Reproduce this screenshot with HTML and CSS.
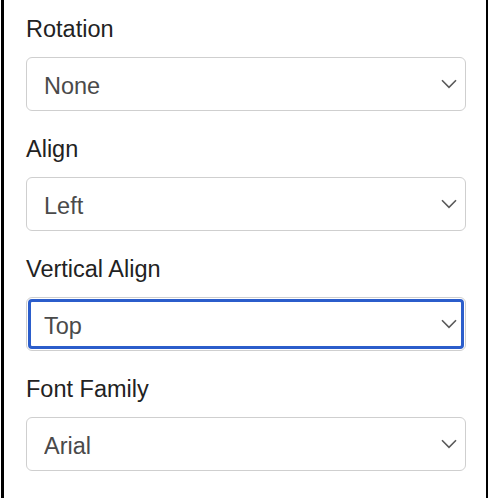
FILE: index.html
```html
<!DOCTYPE html>
<html>
<head>
<meta charset="utf-8">
<link rel="stylesheet" href="styles.css">
</head>
<body>
<div class="panel">
  <div class="field">
    <label class="label">Rotation</label>
    <div class="select-wrap">
      <select class="select"><option>None</option></select>
      <svg class="chev" width="16" height="10" viewBox="0 0 16 10"><path d="M1 1.2 L8 8.4 L15 1.2" fill="none" stroke="#5a5a5a" stroke-width="1.6"/></svg>
    </div>
  </div>
  <div class="field">
    <label class="label">Align</label>
    <div class="select-wrap">
      <select class="select"><option>Left</option></select>
      <svg class="chev" width="16" height="10" viewBox="0 0 16 10"><path d="M1 1.2 L8 8.4 L15 1.2" fill="none" stroke="#5a5a5a" stroke-width="1.6"/></svg>
    </div>
  </div>
  <div class="field">
    <label class="label">Vertical Align</label>
    <div class="select-wrap">
      <select class="select focused"><option>Top</option></select>
      <svg class="chev" width="16" height="10" viewBox="0 0 16 10"><path d="M1 1.2 L8 8.4 L15 1.2" fill="none" stroke="#5a5a5a" stroke-width="1.6"/></svg>
    </div>
  </div>
  <div class="field">
    <label class="label">Font Family</label>
    <div class="select-wrap">
      <select class="select"><option>Arial</option></select>
      <svg class="chev" width="16" height="10" viewBox="0 0 16 10"><path d="M1 1.2 L8 8.4 L15 1.2" fill="none" stroke="#5a5a5a" stroke-width="1.6"/></svg>
    </div>
  </div>
</div>
</body>
</html>
```

FILE: styles.css
```css
html, body {
  margin: 0;
  padding: 0;
  background: #fff;
  overflow: hidden;
  height: 498px;
}
body {
  font-family: "Liberation Sans", Arial, sans-serif;
}
.panel {
  margin-left: 1px;
  border-left: 3px solid #000;
  border-right: 3px solid #000;
  padding: 11px 20px 0 22px;
  box-sizing: border-box;
  width: 488px;
  height: 498px;
  overflow: hidden;
}
.field {
  display: flex;
  flex-direction: column;
  margin-bottom: 20px;
}
.label {
  font-size: 23.5px;
  line-height: 36px;
  color: #222;
  margin-bottom: 10px;
}
.select-wrap {
  position: relative;
}
.select {
  -webkit-appearance: none;
  appearance: none;
  display: block;
  width: 440px;
  height: 54px;
  box-sizing: border-box;
  border: 1.5px solid #cfcfcf;
  border-radius: 6px;
  background: #fff;
  padding: 3px 40px 0 17px;
  font-family: "Liberation Sans", Arial, sans-serif;
  font-size: 23.5px;
  color: #4a4a4a;
  margin: 0;
  outline: none;
}
.select.focused {
  outline: 3.5px solid #2b5dcb;
  outline-offset: -5px;
}
.chev {
  position: absolute;
  right: 9px;
  top: 22px;
  pointer-events: none;
}
```
